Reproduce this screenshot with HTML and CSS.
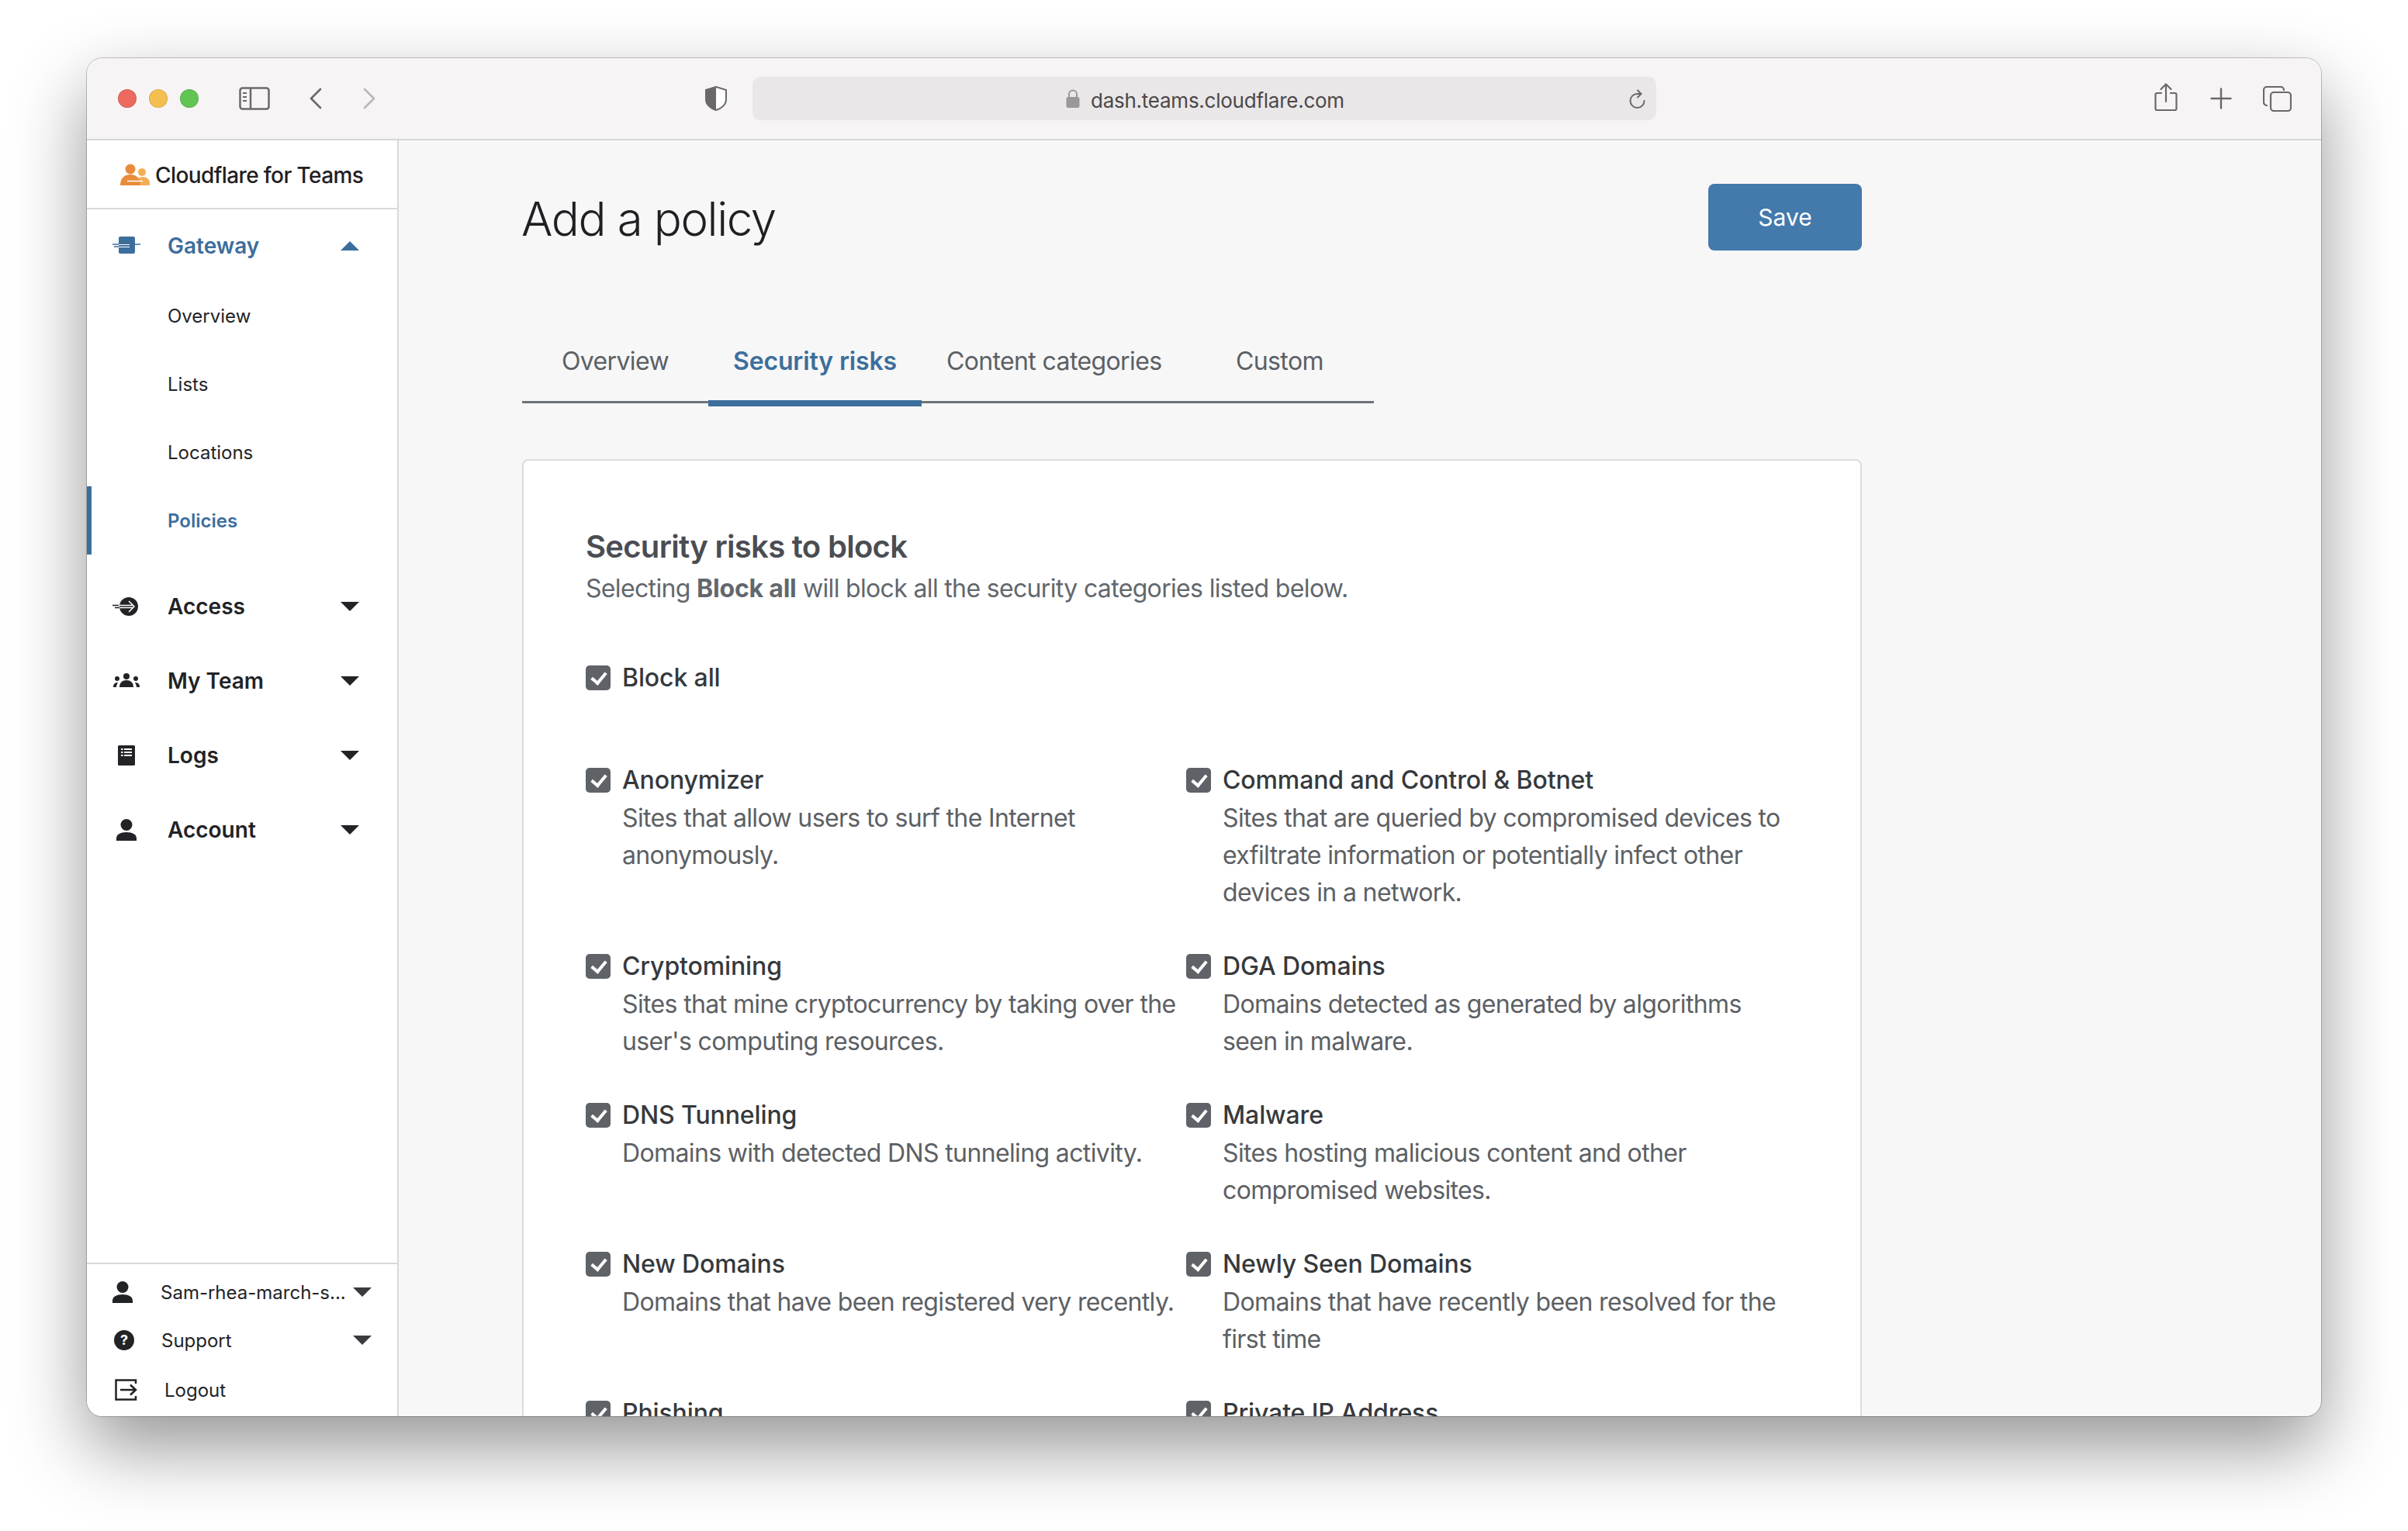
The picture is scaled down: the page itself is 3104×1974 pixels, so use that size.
FILE: index.html
```html
<!DOCTYPE html>
<html lang="en">
<head>
    <meta charset="UTF-8">
    <title>Add a policy</title>
    <link rel="stylesheet" href="styles.css">
</head>
<body>
    <div class="window">
        <!-- Browser toolbar -->
        <div class="toolbar">
            <span class="light light-red"></span>
            <span class="light light-yellow"></span>
            <span class="light light-green"></span>
            <svg class="tb-sidebar" width="40" height="30" viewBox="0 0 40 30" fill="none" stroke="#6b6869" stroke-width="2.5">
                <rect x="1.5" y="1.5" width="37" height="27" rx="3"/>
                <path d="M15 2v26"/>
                <path d="M5 8h5M5 13h5M5 18h5" stroke-width="2"/>
            </svg>
            <svg class="tb-back" width="17" height="28" viewBox="0 0 17 28" fill="none" stroke="#6b6869" stroke-width="2.6" stroke-linecap="round" stroke-linejoin="round">
                <path d="M15 2 3 14l12 12"/>
            </svg>
            <svg class="tb-forward" width="17" height="28" viewBox="0 0 17 28" fill="none" stroke="#b9b7b8" stroke-width="2.6" stroke-linecap="round" stroke-linejoin="round">
                <path d="M2 2l12 12L2 26"/>
            </svg>
            <svg class="tb-shield" width="28" height="32" viewBox="0 0 28 32">
                <path d="M14 1 1 5v12c0 7 6 12 13 14 7-2 13-7 13-14V5z" fill="#fff" stroke="#6b6869" stroke-width="2"/>
                <path d="M14 1 1 5v12c0 7 6 12 13 14z" fill="#6b6869"/>
            </svg>
            <div class="urlbar">
                <svg class="url-lock" width="18" height="24" viewBox="0 0 18 24">
                    <path d="M4 11V6.500a5 5 0 0 1 10 0V11" fill="none" stroke="#9a9899" stroke-width="2"/>
                    <rect x="0.500" y="10" width="17" height="14" rx="2.500" fill="#9a9899"/>
                </svg>
                <span class="url-text">dash.teams.cloudflare.com</span>
                <svg class="url-reload" width="24" height="28" viewBox="0 0 24 28" fill="none" stroke="#6b6869" stroke-width="2" stroke-linecap="round">
                    <path d="M20.500 16a9 9 0 1 1-9-9h4"/>
                    <path d="M12 2.500 16.500 7 12 11.500"/>
                </svg>
            </div>
            <svg class="tb-share" width="30" height="37" viewBox="0 0 30 37" fill="none" stroke="#6b6869" stroke-width="2.200" stroke-linecap="round" stroke-linejoin="round">
                <path d="M9 13H3.500a2 2 0 0 0-2 2v18a2 2 0 0 0 2 2h23a2 2 0 0 0 2-2V15a2 2 0 0 0-2-2H21"/>
                <path d="M15 24V2M8.500 8 15 1.500 21.500 8"/>
            </svg>
            <svg class="tb-plus" width="28" height="28" viewBox="0 0 28 28" stroke="#6b6869" stroke-width="2.400" stroke-linecap="round">
                <path d="M14 1.500v25M1.500 14h25"/>
            </svg>
            <svg class="tb-tabs" width="37" height="33" viewBox="0 0 37 33" fill="none" stroke="#6b6869" stroke-width="2.200">
                <rect x="10" y="8" width="26" height="24" rx="4"/>
                <path d="M6 25H5a4 4 0 0 1-4-4V5a4 4 0 0 1 4-4h18a4 4 0 0 1 4 4v1"/>
            </svg>
        </div>

        <div class="app">
            <!-- Left navigation -->
            <aside class="sidebar">
                <div class="brand">
                    <svg width="38" height="28" viewBox="0 0 38 28">
                        <circle cx="13" cy="7" r="6.500" fill="#e98b3a"/>
                        <circle cx="28" cy="11" r="5" fill="#f3ae55"/>
                        <path d="M20 28h18v-3c0-5-4-8-9-8-3 0-6 1-9 4z" fill="#f3ae55"/>
                        <path d="M0 28c0-9 5-14 13-14s13 5 13 14z" fill="#e98b3a"/>
                        <path d="M9 22.500h20" stroke="#fff" stroke-width="1.500"/>
                    </svg>
                    <span class="brand-name">Cloudflare for Teams</span>
                </div>

                <nav class="nav">
                    <div class="nav-row nav-row-open">
                        <svg class="nav-icon" width="36" height="24" viewBox="0 0 36 24">
                            <rect x="8" y="0" width="21" height="22" rx="2" fill="#3c6e9c"/>
                            <path d="M0 10h24M22 10h14M2 13h20" stroke="#3c6e9c" stroke-width="1.500"/>
                            <path d="M8 10.500h14M8 13.500h14" stroke="#fff" stroke-width="1.200"/>
                        </svg>
                        <span class="nav-label">Gateway</span>
                        <span class="caret caret-up"></span>
                    </div>
                    <div class="sub-item">Overview</div>
                    <div class="sub-item">Lists</div>
                    <div class="sub-item">Locations</div>
                    <div class="sub-item sub-item-active">Policies</div>

                    <div class="nav-row nav-row-first">
                        <svg class="nav-icon" width="36" height="24" viewBox="0 0 36 24">
                            <circle cx="21" cy="12" r="12" fill="#222326"/>
                            <path d="M0 10.500h10M3 13.500h8" stroke="#222326" stroke-width="1.500"/>
                            <path d="M8 10.500h19M9 13.500h18M21 5l7 7-7 7" fill="none" stroke="#fff" stroke-width="1.500"/>
                        </svg>
                        <span class="nav-label">Access</span>
                        <span class="caret"></span>
                    </div>
                    <div class="nav-row">
                        <svg class="nav-icon" width="36" height="20" viewBox="0 0 36 20" fill="#222326">
                            <circle cx="18" cy="4" r="4"/>
                            <path d="M9 18c0-6 4-9 9-9s9 3 9 9z"/>
                            <circle cx="6" cy="7" r="3"/>
                            <circle cx="30" cy="7" r="3"/>
                            <path d="M1 18c0-4 2-6 6-6-1 2-2 4-2 6zM35 18c0-4-2-6-6-6 1 2 2 4 2 6z"/>
                        </svg>
                        <span class="nav-label">My Team</span>
                        <span class="caret"></span>
                    </div>
                    <div class="nav-row">
                        <svg class="nav-icon" width="36" height="26" viewBox="0 0 36 26">
                            <rect x="7" y="0" width="22" height="26" rx="1.500" fill="#222326"/>
                            <path d="M11 5h2.500M15 5h10M11 9h2.500M15 9h10M11 13h2.500M15 13h10" stroke="#fff" stroke-width="2"/>
                        </svg>
                        <span class="nav-label">Logs</span>
                        <span class="caret"></span>
                    </div>
                    <div class="nav-row">
                        <svg class="nav-icon" width="36" height="28" viewBox="0 0 36 28" fill="#222326">
                            <circle cx="18" cy="7.500" r="7.500"/>
                            <path d="M5 28v-3c0-5 5-8 13-8s13 3 13 8v3z"/>
                        </svg>
                        <span class="nav-label">Account</span>
                        <span class="caret"></span>
                    </div>
                </nav>

                <div class="side-foot">
                    <div class="foot-row">
                        <svg class="foot-icon" width="26" height="28" viewBox="0 0 26 28" fill="#222326">
                            <circle cx="13" cy="7.500" r="7.500"/>
                            <path d="M0 28v-3c0-5 5-8 13-8s13 3 13 8v3z"/>
                        </svg>
                        <span class="foot-label">Sam-rhea-march-s...</span>
                        <span class="caret caret-dark"></span>
                    </div>
                    <div class="foot-row foot-row-support">
                        <svg class="foot-icon" width="26" height="26" viewBox="0 0 26 26">
                            <circle cx="13" cy="13" r="13" fill="#222326"/>
                            <text x="13" y="19" class="help-mark" text-anchor="middle">?</text>
                        </svg>
                        <span class="foot-label">Support</span>
                        <span class="caret caret-dark"></span>
                    </div>
                    <div class="foot-row foot-row-logout">
                        <svg class="foot-icon" width="29" height="28" viewBox="0 0 29 28" fill="none" stroke="#222326" stroke-width="2.500">
                            <path d="M27 6V1.500H1.500v25H27V22"/>
                            <path d="M7 14h20M20 7.500l7 6.500-7 6.500"/>
                        </svg>
                        <span class="foot-label">Logout</span>
                    </div>
                </div>
            </aside>

            <!-- Page content -->
            <main class="content">
                <div class="page-head">
                    <h1>Add a policy</h1>
                    <button class="save-btn">Save</button>
                </div>

                <div class="tabs">
                    <div class="tab">Overview</div>
                    <div class="tab tab-active">Security risks</div>
                    <div class="tab">Content categories</div>
                    <div class="tab">Custom</div>
                </div>

                <section class="card">
                    <h2>Security risks to block</h2>
                    <p class="card-sub">Selecting <b>Block all</b> will block all the security categories listed below.</p>

                    <label class="check check-all"><span class="box"></span><span class="check-title">Block all</span></label>

                    <div class="risk-grid">
                        <div class="check">
                            <span class="box"></span>
                            <div><div class="check-title">Anonymizer</div>
                            <div class="check-desc">Sites that allow users to surf the Internet anonymously.</div></div>
                        </div>
                        <div class="check">
                            <span class="box"></span>
                            <div><div class="check-title">Command and Control &amp; Botnet</div>
                            <div class="check-desc">Sites that are queried by compromised devices to exfiltrate information or potentially infect other devices in a network.</div></div>
                        </div>
                        <div class="check">
                            <span class="box"></span>
                            <div><div class="check-title">Cryptomining</div>
                            <div class="check-desc">Sites that mine cryptocurrency by taking over the user's computing resources.</div></div>
                        </div>
                        <div class="check">
                            <span class="box"></span>
                            <div><div class="check-title">DGA Domains</div>
                            <div class="check-desc">Domains detected as generated by algorithms seen in malware.</div></div>
                        </div>
                        <div class="check">
                            <span class="box"></span>
                            <div><div class="check-title">DNS Tunneling</div>
                            <div class="check-desc">Domains with detected DNS tunneling activity.</div></div>
                        </div>
                        <div class="check">
                            <span class="box"></span>
                            <div><div class="check-title">Malware</div>
                            <div class="check-desc">Sites hosting malicious content and other compromised websites.</div></div>
                        </div>
                        <div class="check">
                            <span class="box"></span>
                            <div><div class="check-title">New Domains</div>
                            <div class="check-desc">Domains that have been registered very recently.</div></div>
                        </div>
                        <div class="check">
                            <span class="box"></span>
                            <div><div class="check-title">Newly Seen Domains</div>
                            <div class="check-desc">Domains that have recently been resolved for the first time</div></div>
                        </div>
                        <div class="check">
                            <span class="box"></span>
                            <div><div class="check-title">Phishing</div></div>
                        </div>
                        <div class="check">
                            <span class="box"></span>
                            <div><div class="check-title">Private IP Address</div></div>
                        </div>
                    </div>
                </section>
            </main>
        </div>
    </div>
</body>
</html>
```

FILE: styles.css
```css
html, body {
    margin: 0;
    padding: 0;
    background: #fff;
}

body {
    width: 3104px;
    height: 1974px;
    overflow: hidden;
    font-family: Inter, "Liberation Sans", sans-serif;
    color: #222326;
}

.window {
    width: 2880px;
    height: 1751px;
    margin: 75px 0 0 112px;
    border-radius: 20px;
    overflow: hidden;
    display: flex;
    flex-direction: column;
    background: #f7f7f7;
    box-shadow: 0 0 0 1px rgba(0, 0, 0, 0.22), 0 40px 95px rgba(0, 0, 0, 0.42);
}

/* toolbar */
.toolbar {
    height: 106px;
    flex: none;
    box-sizing: border-box;
    padding-left: 40px;
    display: flex;
    align-items: center;
    background: #f7f4f5;
    border-bottom: 2px solid #d8d6d7;
}

.light {
    width: 24px;
    height: 24px;
    border-radius: 50%;
    margin-right: 16px;
    box-sizing: border-box;
    border: 1px solid rgba(0, 0, 0, 0.1);
}
.light-red { background: #ec6a5e; }
.light-yellow { background: #f4bf4f; }
.light-green { background: #61c554; }

.tb-sidebar { margin-left: 36px; }
.tb-back { margin-left: 50px; }
.tb-forward { margin-left: 53px; }
.tb-shield { margin-left: 424px; }

.urlbar {
    width: 1165px;
    height: 56px;
    margin-left: 33px;
    border-radius: 10px;
    background: #eae7e8;
    position: relative;
    display: flex;
    align-items: center;
    padding-left: 404px;
    box-sizing: border-box;
    font-size: 26px;
    letter-spacing: -0.25px;
    color: #4a4849;
}
.url-lock { margin-right: 14px; }
.url-text { margin-top: 4px; }
.url-reload {
    position: absolute;
    right: 12px;
    top: 15px;
}
.tb-share { margin-left: 642px; margin-top: -4px; }
.tb-plus { margin-left: 42px; }
.tb-tabs { margin-left: 40px; }

/* app layout */
.app {
    flex: 1;
    min-height: 0;
    display: flex;
}

.sidebar {
    width: 402px;
    flex: none;
    box-sizing: border-box;
    background: #fff;
    border-right: 2px solid #d9d9d9;
    display: flex;
    flex-direction: column;
}

.brand {
    height: 89px;
    flex: none;
    box-sizing: border-box;
    border-bottom: 2px solid #d9d9d9;
    padding: 0 0 0 43px;
    display: flex;
    align-items: center;
    gap: 7px;
    font-size: 28px;
    font-weight: 500;
    letter-spacing: -0.6px;
    color: #1f2023;
    white-space: nowrap;
}
.brand-name { margin-top: 3px; }

.nav-row {
    height: 96px;
    display: flex;
    align-items: center;
    padding: 0 49px 0 33px;
    font-size: 28px;
    font-weight: 600;
}
.nav-row-open {
    height: 93px;
    color: #3c6e9c;
}
.nav-row-first { margin-top: 19px; }
.nav-icon {
    flex: none;
    margin-right: 35px;
}
.nav-label { flex: 1; }

.caret {
    width: 0;
    height: 0;
    border-left: 12.500px solid transparent;
    border-right: 12.500px solid transparent;
    border-top: 12px solid #222326;
}
.caret-dark { border-top-color: #3a3b3f; }
.caret-up {
    border-top: none;
    border-bottom: 12px solid #3c6e9c;
}

.sub-item {
    height: 88px;
    display: flex;
    align-items: center;
    padding-left: 104px;
    font-size: 24px;
    color: #222326;
}
.sub-item-active {
    font-weight: 600;
    color: #3c6e9c;
    box-shadow: inset 6px 0 0 #3c6e9c;
}

.side-foot {
    margin-top: auto;
    height: 198px;
    flex: none;
    box-sizing: border-box;
    border-top: 2px solid #d9d9d9;
    padding-top: 5px;
}
.foot-row {
    height: 62px;
    display: flex;
    align-items: center;
    padding: 0 33px 0 33px;
    font-size: 24px;
}
.foot-icon {
    flex: none;
    margin-right: 36px;
}
.foot-label { flex: 1; white-space: nowrap; }
.foot-row-support { padding-left: 35px; }
.foot-row-support .foot-icon { margin-right: 35px; }
.foot-row-logout { padding-left: 36px; margin-top: 2px; }
.foot-row-logout .foot-icon { margin-right: 35px; }
.help-mark {
    fill: #fff;
    font-size: 18px;
    font-weight: 700;
}

/* main area */
.content {
    flex: 1;
    min-width: 0;
    box-sizing: border-box;
    padding: 56px 0 0 159px;
    overflow: hidden;
}

.page-head {
    width: 1727px;
    height: 86px;
    display: flex;
    align-items: center;
    justify-content: space-between;
}

h1 {
    margin: 0 0 0 -1px;
    padding-top: 4px;
    font-size: 60px;
    font-weight: 300;
    letter-spacing: -1.4px;
    color: #1f2023;
}

.save-btn {
    width: 198px;
    height: 86px;
    border: none;
    border-radius: 8px;
    background: #4479ab;
    color: #fff;
    font-family: inherit;
    font-size: 30px;
}

.tabs {
    width: 1098px;
    margin-top: 93px;
    display: flex;
    border-bottom: 3px solid #6d7278;
    letter-spacing: -0.62px;
}
.tab {
    min-width: 240px;
    height: 101px;
    padding: 26px 32px 0;
    box-sizing: border-box;
    text-align: center;
    line-height: 48px;
    font-size: 32px;
    color: #5b6066;
    white-space: nowrap;
    position: relative;
}
.tab-active {
    font-weight: 600;
    letter-spacing: -0.15px;
    color: #3c6e9c;
}
.tab-active::after {
    content: "";
    position: absolute;
    left: 0;
    right: 0;
    bottom: -7px;
    height: 8px;
    background: #3c6e9c;
}

.card {
    width: 1727px;
    box-sizing: border-box;
    margin-top: 72px;
    padding: 81px 80px 80px 80px;
    background: #fff;
    border: 2px solid #dcdcdc;
    border-radius: 8px;
}

h2 {
    margin: 0;
    font-size: 40px;
    line-height: 60px;
    font-weight: 600;
    letter-spacing: -0.7px;
    color: #4a4d52;
}

.card-sub {
    margin: 0;
    font-size: 32px;
    line-height: 48px;
    letter-spacing: -0.66px;
    color: #62676c;
}
.card-sub b { letter-spacing: -0.2px; }

.check {
    display: flex;
    gap: 15px;
    font-size: 32px;
    line-height: 48px;
    letter-spacing: -0.63px;
}
.check-all {
    margin-top: 68px;
}
.check-title {
    font-weight: 500;
    line-height: 46px;
    margin-bottom: 2px;
    letter-spacing: -0.12px;
    color: #36393c;
}
.check-desc {
    color: #5c6064;
}

.box {
    width: 32px;
    height: 32px;
    flex: none;
    margin-top: 7px;
    border-radius: 5px;
    background: #5f6368;
    position: relative;
}
.box::after {
    content: "";
    position: absolute;
    left: 11px;
    top: 5px;
    width: 8px;
    height: 15px;
    border: solid #fff;
    border-width: 0 4px 4px 0;
    transform: rotate(40deg);
}

.risk-grid {
    margin-top: 84px;
    display: grid;
    grid-template-columns: 774px 790px;
    gap: 48px 0;
}
```
